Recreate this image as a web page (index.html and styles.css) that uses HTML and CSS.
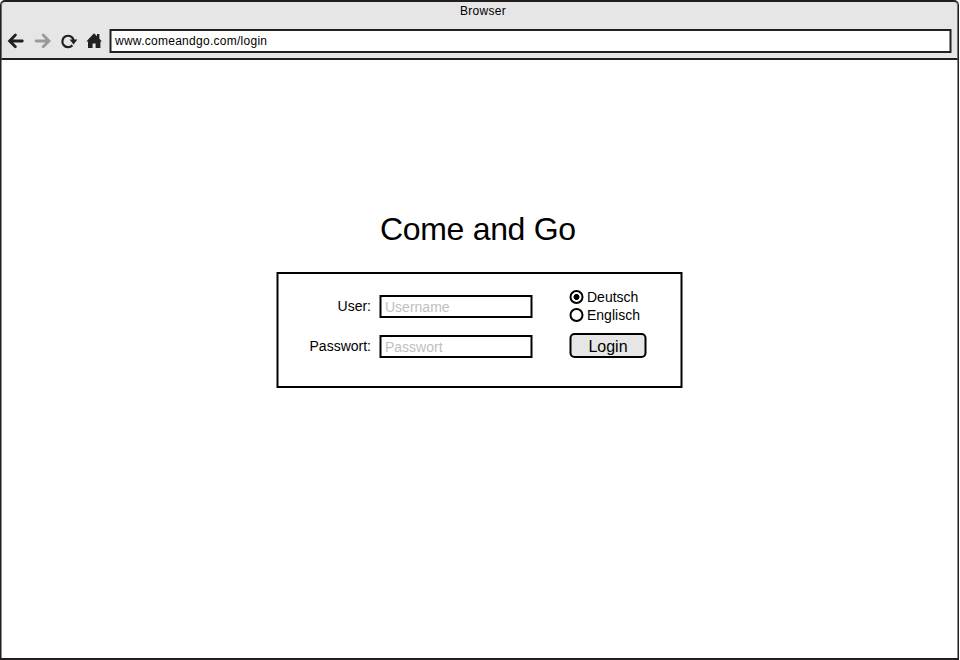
FILE: index.html
```html
<!DOCTYPE html>
<html lang="de">
<head>
<meta charset="utf-8">
<title>Browser</title>
<link rel="stylesheet" href="styles.css">
</head>
<body>
<div class="window">
  <header class="chrome">
    <div class="title"><span>Browser</span></div>
    <div class="toolbar">
      <svg class="nav-icons" width="108" height="24" viewBox="0 29 108 24">
        <path d="M22.3 41H10M15.4 35.1L9.6 40.9l5.8 5.8" fill="none" stroke="#231f20" stroke-width="2.8" stroke-linecap="round"/>
        <path d="M36.2 41h12.3M43.2 35.1L49 40.9l-5.8 5.8" fill="none" stroke="#999" stroke-width="2.8" stroke-linecap="round"/>
        <path d="M72.4 45.2A5.7 5.7 0 1 1 73.6 40" fill="none" stroke="#231f20" stroke-width="2.2"/>
        <path d="M69.6 39.4h7.8l-3.9 5.2z" fill="#231f20"/>
        <path d="M86.3 41.4L94 33.3l3 3V34h2.4v4.7l2.5 2.7H100.4V48H95.6V43.6h-3V48H88V41.4z" fill="#231f20"/>
      </svg>
      <div class="address"><span>www.comeandgo.com/login</span></div>
    </div>
  </header>
  <main class="page">
    <h1>Come and Go</h1>
    <form class="login">
      <div class="fields">
        <label for="user">User:</label>
        <input id="user" type="text" placeholder="Username">
        <label for="pass">Passwort:</label>
        <input id="pass" type="text" placeholder="Passwort">
      </div>
      <div class="side">
        <label class="option"><input type="radio" name="lang" checked><span>Deutsch</span></label>
        <label class="option"><input type="radio" name="lang"><span>Englisch</span></label>
        <button type="button">Login</button>
      </div>
    </form>
  </main>
</div>
</body>
</html>
```
FILE: styles.css
```css
* { box-sizing: border-box; }
body {
  margin: 0;
  background: #fff;
  color: #000;
  font-family: "Liberation Sans", Arial, sans-serif;
}
.window {
  width: 959px;
  height: 660px;
  border: 2px solid #231f20;
  border-left-width: 1px;
  border-right-width: 1px;
  border-radius: 5px 5px 0 0;
  box-shadow: inset 1px 0 #8b898a, inset -1px 0 #8b898a;
}
.chrome {
  height: 58px;
  background: #e6e6e6;
  border-bottom: 2px solid #231f20;
  border-left: 1px solid #6f6c6d;
  border-right: 1px solid #6f6c6d;
  border-radius: 4px 4px 0 0;
}
.title {
  height: 27px;
  line-height: 18px;
  text-align: center;
  font-size: 12px;
  letter-spacing: 0.3px;
  padding-left: 7px;
}
.toolbar { display: flex; margin-left: -2px; }
.nav-icons { display: block; flex: none; }
.address {
  flex: none;
  width: 841px;
  height: 24px;
  margin-left: 2px;
  padding-left: 4px;
  border: 2px solid #231f20;
  border-left-width: 1px;
  border-right-width: 1px;
  box-shadow: inset 1px 0 #918f8f, inset -1px 0 #918f8f, 1px 0 #858283, -1px 0 #858283;
  background: #fff;
  font-size: 12px;
  line-height: 20px;
  letter-spacing: 0.27px;
}
.page { padding: 150px 0 0 276px; }
h1 {
  margin: 0;
  padding-left: 103px;
  height: 62px;
  font-size: 32px;
  font-weight: 400;
  line-height: 38px;
  letter-spacing: -0.32px;
}
.login {
  display: flex;
  width: 405px;
  height: 116px;
  padding: 15px 0 0 15px;
  border: 2px solid #000;
  border-left-width: 1px;
  border-right-width: 1px;
  box-shadow: inset 1px 0 #808080, inset -1px 0 #808080, 1px 0 #808080, -1px 0 #808080;
}
.fields {
  display: grid;
  grid-template-columns: 78px 152px;
  grid-auto-rows: 23px;
  gap: 17px 9px;
  padding-top: 6px;
  text-align: right;
  font-size: 14px;
  line-height: 22px;
}
.fields input {
  width: 152px;
  height: 23px;
  padding: 1px 0 0 4px;
  border: 2px solid #000;
  border-left-width: 1px;
  border-right-width: 1px;
  border-radius: 0;
  box-shadow: inset 1px 0 #808080, inset -1px 0 #808080, 1px 0 #808080, -1px 0 #808080;
  background: #fff;
  font: 14px "Liberation Sans", Arial, sans-serif;
}
.fields input::placeholder { color: #bfbfbf; opacity: 1; }
.side { width: 78px; margin-left: 37px; }
.option {
  display: flex;
  height: 18px;
  font-size: 14px;
  line-height: 16px;
}
.option input {
  appearance: none;
  flex: none;
  width: 14px;
  height: 14px;
  margin: 1px 4px 0 0;
  border: 2px solid #000;
  border-radius: 50%;
  background: #fff;
  transform: translateX(0.5px);
}
.option input:checked { background: radial-gradient(circle, #000 2.6px, #fff 3.3px); }
button {
  position: relative;
  z-index: 0;
  display: block;
  width: 78px;
  height: 25px;
  margin-top: 8px;
  padding: 2px 0 0;
  border: 0;
  background: none;
  color: #000;
  font: 16px "Liberation Sans", Arial, sans-serif;
}
button::before {
  content: "";
  position: absolute;
  z-index: -1;
  inset: 0 1px 0 0;
  border: 2px solid #000;
  border-radius: 5px;
  background: #e6e6e6;
  transform: translateX(0.5px);
}
```
